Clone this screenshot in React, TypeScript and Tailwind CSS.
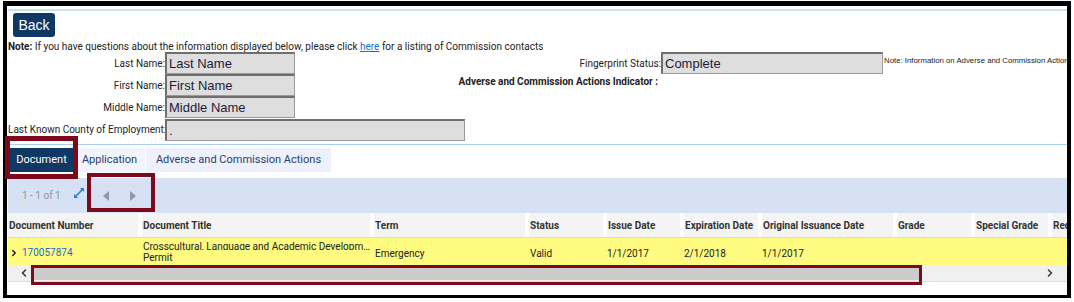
import { ChevronLeft, ChevronRight } from 'lucide-react'

const cols = [
  { label: 'Document Number', w: 'w-[130px]' },
  { label: 'Document Title', w: 'w-[232px]' },
  { label: 'Term', w: 'w-[155px]' },
  { label: 'Status', w: 'w-[78px]' },
  { label: 'Issue Date', w: 'w-[77px]' },
  { label: 'Expiration Date', w: 'w-[78px]' },
  { label: 'Original Issuance Date', w: 'w-[135px]' },
  { label: 'Grade', w: 'w-[78px]' },
  { label: 'Special Grade', w: 'w-[77px]' },
  { label: 'Requirement', w: 'w-[60px]' },
]

function Field({ value, w = 'w-[130px]' }: { value: string; w?: string }) {
  return (
    <div
      className={`${w} h-[22px] bg-[#dedede] border border-[#9a9a9a] border-t-2 border-t-[#6f6f6f] border-l-2 border-l-[#6f6f6f] pl-[2px] flex items-center text-[13px] text-[#1d1b3a] font-['Liberation_Sans',Arial,sans-serif] leading-none`}
    >
      {value}
    </div>
  )
}

function Row({ label, value }: { label: string; value: string }) {
  return (
    <div className="flex items-center h-[22px]">
      <div className="w-[157px] text-right text-[10px] whitespace-nowrap">{label}</div>
      <Field value={value} />
    </div>
  )
}

export default function App() {
  return (
    <div className="relative w-[1074px] h-[302px] bg-white overflow-hidden pl-[3px] pt-[1px] font-['Roboto',sans-serif] text-[#222]">
      <div className="w-[1068px] h-[297px] border-l-4 border-t-[5px] border-r-4 border-b-[3px] border-black overflow-hidden">
        <div className="pt-[3px] pl-[1px]">
          <div className="h-[2px] bg-[#cfe0f1]" />
          <button className="mt-[2px] ml-[5px] w-[42px] h-[24px] rounded-[3px] bg-[#0f3865] text-white text-[14px] font-['Liberation_Sans',Arial,sans-serif] flex items-center justify-center">
            Back
          </button>
          <div className="h-[15px] pt-[3px] flex items-center text-[10px] whitespace-nowrap">
            <span className="font-bold">Note:</span>
            <span>&nbsp;If you have questions about the information displayed below, please click&nbsp;</span>
            <span className="text-[#1a6fcf] underline">here </span>
            <span>&nbsp;for a listing of Commission contacts</span>
          </div>

          <div className="flex">
            <div className="w-[457px]">
              <Row label="Last Name:" value="Last Name" />
              <Row label="First Name:" value="First Name" />
              <Row label="Middle Name:" value="Middle Name" />
              <div className="flex items-center h-[23px]">
                <div className="w-[157px] text-right text-[10px] whitespace-nowrap">Last Known County of Employment:</div>
                <Field value="." w="w-[300px]" />
              </div>
            </div>
            <div className="flex-1">
              <div className="flex items-start h-[22px]">
                <div className="w-[196px] h-[22px] flex items-center justify-end text-[10px] whitespace-nowrap">Fingerprint Status:</div>
                <Field value="Complete" w="w-[222px]" />
                <div className="pl-[1px] pt-[3px] text-[7.8px] font-['Liberation_Sans',Arial,sans-serif] whitespace-nowrap">
                  Note: Information on Adverse and Commission Actions
                </div>
              </div>
              <div className="w-[193px] h-[14px] flex items-center justify-end text-[10px] font-bold whitespace-nowrap">
                Adverse and Commission Actions Indicator :
              </div>
            </div>
          </div>

          <div className="mt-[3px] h-px bg-[#a9cdee]" />

          <div className="mt-[3px] ml-[2px] flex gap-px h-[24px] text-[11px]">
            <div className="w-[63px] bg-[#0f3865] text-white flex items-center justify-center">Document</div>
            <div className="w-[71px] bg-[#f1f4fb] text-[#1f3f73] flex items-center justify-center">Application</div>
            <div className="w-[185px] bg-[#eef1fb] text-[#1f3f73] flex items-center justify-center">Adverse and Commission Actions</div>
          </div>

          <div className="mt-[6px] h-[35px] bg-[#d6e1f3] flex items-center">
            <span className="ml-[14px] text-[10px] text-[#8994a6]">1 - 1 of 1</span>
            <svg className="ml-[13px] -mt-[6px]" width="10" height="10" viewBox="0 0 10 10" fill="#2b7fd6">
              <path d="M10 0 L10 4 L8.6 2.6 L5.6 5.6 L4.4 4.4 L7.4 1.4 L6 0 Z" />
              <path d="M0 10 L0 6 L1.4 7.4 L4.4 4.4 L5.6 5.6 L2.6 8.6 L4 10 Z" />
            </svg>
            <svg className="ml-[19px]" width="6" height="10" viewBox="0 0 6 10" fill="#8c99ad">
              <path d="M6 0 L0 5 L6 10 Z" />
            </svg>
            <svg className="ml-[21px]" width="6" height="10" viewBox="0 0 6 10" fill="#8c99ad">
              <path d="M0 0 L6 5 L0 10 Z" />
            </svg>
          </div>

          <div className="flex h-[25px] bg-[#f4f4f4] border-b border-[#dcdcdc] text-[10px] font-bold text-[#333] whitespace-nowrap">
            {cols.map((c, i) => (
              <div
                key={c.label}
                className={`${c.w} shrink-0 flex items-center pl-px overflow-hidden ${i > 0 ? 'border-l-4 border-white' : ''}`}
              >
                {c.label}
              </div>
            ))}
          </div>

          <div className="flex h-[27px] bg-[#fffb80] text-[10px] text-[#222] whitespace-nowrap">
            <div className="w-[130px] shrink-0 flex items-center pt-[2px]">
              <ChevronRight className="w-[10px] h-[10px] ml-[1px]" strokeWidth={3.5} color="#222" />
              <span className="ml-[3px] text-[#1b6bc4]">170057874</span>
            </div>
            <div className="w-[232px] shrink-0 pl-[5px] flex flex-col leading-[15px] pt-px overflow-hidden">
              <span className="block truncate">Crosscultural, Language and Academic Development (CLAD) Emergency</span>
              <span className="block">Permit</span>
            </div>
            <div className="w-[155px] shrink-0 pl-[5px] pt-[3px] flex items-center">Emergency</div>
            <div className="w-[78px] shrink-0 pl-[5px] pt-[3px] flex items-center">Valid</div>
            <div className="w-[77px] shrink-0 pl-[4px] pt-[3px] flex items-center">1/1/2017</div>
            <div className="w-[78px] shrink-0 pl-[4px] pt-[3px] flex items-center">2/1/2018</div>
            <div className="w-[135px] shrink-0 pl-[4px] pt-[3px] flex items-center">1/1/2017</div>
          </div>

          <div className="h-[17px] bg-[#f0f0f0] border-b border-[#dddddd] flex items-center">
            <ChevronLeft className="w-[12px] h-[12px] ml-[10px]" strokeWidth={3} color="#333" />
            <div className="ml-[4px] w-[886px] h-[13px] bg-[#cbcbcb]" />
            <ChevronRight className="w-[12px] h-[12px] ml-auto mr-[11px]" strokeWidth={3} color="#333" />
          </div>
        </div>
      </div>

      <div className="absolute left-[5px] top-[136px] w-[73px] h-[43px] border-[5px] border-[#7d0a1c]" />
      <div className="absolute left-[87px] top-[173px] w-[68px] h-[39px] border-4 border-[#7d0a1c]" />
      <div className="absolute left-[31px] top-[265px] w-[891px] h-[20px] border-[3px] border-[#7d0a1c]" />
    </div>
  )
}
